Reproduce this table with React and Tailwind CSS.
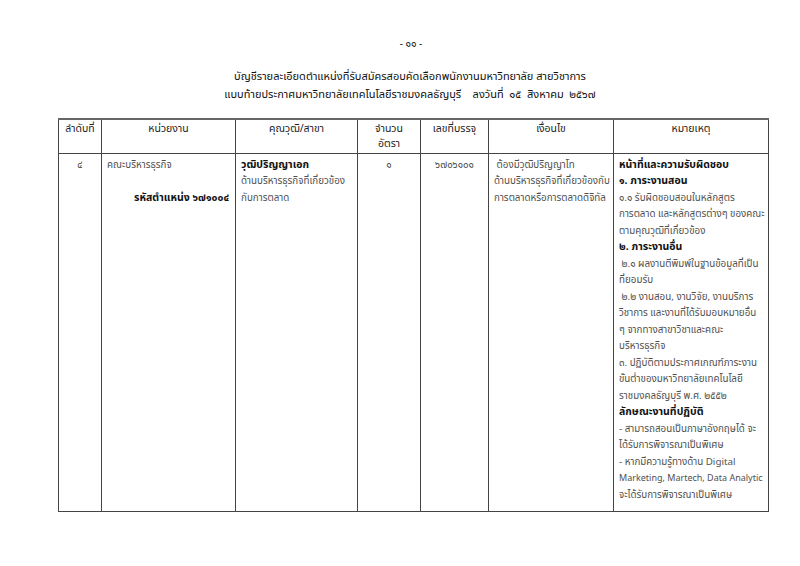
import React from "react";

const cols = ["w-[43px]", "w-[134px]", "w-[122px]", "w-[63px]", "w-[68px]", "w-[125px]", "w-[155px]"];

const headers = [
  ["ลำดับที่"],
  ["หน่วยงาน"],
  ["คุณวุฒิ/สาขา"],
  ["จำนวน", "อัตรา"],
  ["เลขที่บรรจุ"],
  ["เงื่อนไข"],
  ["หมายเหตุ"],
];

const remarks = [
  { t: "หน้าที่และความรับผิดชอบ", b: true },
  { t: "๑. ภาระงานสอน", b: true },
  { t: "๑.๑ รับผิดชอบสอนในหลักสูตร" },
  { t: "การตลาด และหลักสูตรต่างๆ ของคณะ" },
  { t: "ตามคุณวุฒิที่เกี่ยวข้อง" },
  { t: "๒. ภาระงานอื่น", b: true },
  { t: "\u00a0๒.๑ ผลงานตีพิมพ์ในฐานข้อมูลที่เป็น" },
  { t: "ที่ยอมรับ" },
  { t: "\u00a0๒.๒ งานสอน, งานวิจัย, งานบริการ" },
  { t: "วิชาการ และงานที่ได้รับมอบหมายอื่น" },
  { t: "ๆ จากทางสาขาวิชาและคณะ" },
  { t: "บริหารธุรกิจ" },
  { t: "๓. ปฏิบัติตามประกาศเกณฑ์ภาระงาน" },
  { t: "ขั้นต่ำของมหาวิทยาลัยเทคโนโลยี" },
  { t: "ราชมงคลธัญบุรี พ.ศ. ๒๕๕๒" },
  { t: "ลักษณะงานที่ปฏิบัติ", b: true },
  { t: "- สามารถสอนเป็นภาษาอังกฤษได้ จะ" },
  { t: "ได้รับการพิจารณาเป็นพิเศษ" },
  { t: "- หากมีความรู้ทางด้าน Digital" },
  { t: "Marketing, Martech, Data Analytic", tight: true },
  { t: "จะได้รับการพิจารณาเป็นพิเศษ" },
];

function Line({ children, bold, tight, className = "" }) {
  return (
    <div
      className={`h-[16.5px] leading-[16.5px] whitespace-nowrap ${
        bold ? "font-bold text-[#111] text-[10.5px]" : "text-[#505050]"
      } ${!bold && tight ? "text-[9px]" : ""} ${!bold && !tight ? "text-[9.8px]" : ""} ${className}`}
    >
      {children}
    </div>
  );
}

export default function App() {
  return (
    <div
      className="w-[800px] h-[566px] bg-white overflow-hidden flex flex-col"
      style={{ fontFamily: '"Noto Sans Thai", "Noto Sans", "DejaVu Sans", sans-serif' }}
    >
      <div className="pt-[37px] text-center text-[10px] leading-[14px] text-[#222] pl-[22px]">- ๑๑ -</div>

      <div className="mt-[17px] flex flex-col items-center text-[11px] leading-[18px] text-[#111] pl-[20px]">
        <div>บัญชีรายละเอียดตำแหน่งที่รับสมัครสอบคัดเลือกพนักงานมหาวิทยาลัย สายวิชาการ</div>
        <div className="whitespace-pre">
          แบบท้ายประกาศมหาวิทยาลัยเทคโนโลยีราชมงคลธัญบุรี    ลงวันที่  ๑๕  สิงหาคม  ๒๕๖๗
        </div>
      </div>

      <table className="ml-[58px] mt-[14px] w-[710px] table-fixed border-collapse">
        <colgroup>
          {cols.map((c, i) => (
            <col key={i} className={c} />
          ))}
        </colgroup>
        <thead>
          <tr className="h-[34px]">
            {headers.map((h, i) => (
              <th
                key={i}
                className="border border-[#444] border-t-2 border-t-[#666] align-top pt-[2px] font-normal text-[#222] text-[10.5px] leading-[15px]"
              >
                {h.map((l) => (
                  <div key={l}>{l}</div>
                ))}
              </th>
            ))}
          </tr>
        </thead>
        <tbody>
          <tr className="h-[358px]">
            <td className="border border-[#444] align-top pt-[3px] text-center">
              <Line>๔</Line>
            </td>
            <td className="border border-[#444] align-top pt-[3px] pl-[5px]">
              <Line>คณะบริหารธุรกิจ</Line>
              <Line />
              <Line bold className="pl-[27px]">รหัสตำแหน่ง ๖๗๑๐๐๔</Line>
            </td>
            <td className="border border-[#444] align-top pt-[3px] pl-[5px]">
              <Line bold>วุฒิปริญญาเอก</Line>
              <Line>ด้านบริหารธุรกิจที่เกี่ยวข้อง</Line>
              <Line>กับการตลาด</Line>
            </td>
            <td className="border border-[#444] align-top pt-[3px] text-center">
              <Line>๑</Line>
            </td>
            <td className="border border-[#444] align-top pt-[3px] text-center">
              <Line>๖๗๐๖๑๐๑</Line>
            </td>
            <td className="border border-[#444] align-top pt-[3px] pl-[5px]">
              <Line>{"\u00a0ต้องมีวุฒิปริญญาโท"}</Line>
              <Line>ด้านบริหารธุรกิจที่เกี่ยวข้องกับ</Line>
              <Line>การตลาดหรือการตลาดดิจิทัล</Line>
            </td>
            <td className="border border-[#444] align-top pt-[3px] pl-[5px]">
              {remarks.map((r, i) => (
                <Line key={i} bold={r.b} tight={r.tight}>
                  {r.t}
                </Line>
              ))}
            </td>
          </tr>
        </tbody>
      </table>
    </div>
  );
}
